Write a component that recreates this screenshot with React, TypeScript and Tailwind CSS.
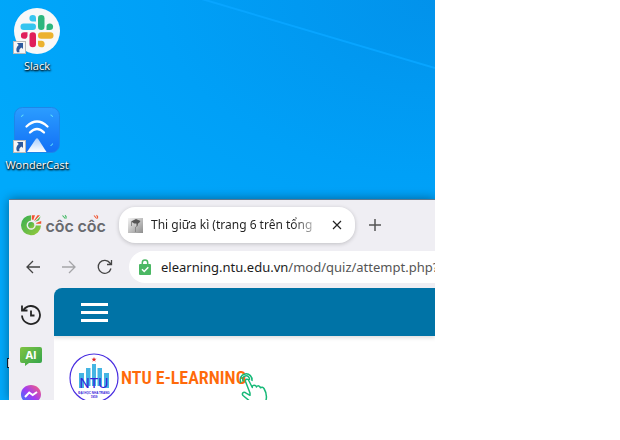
import type { ReactNode } from "react";

function Shortcut({ label, children }: { label: string; children: ReactNode }) {
  return (
    <a
      href="#"
      className="flex h-[99px] w-[74px] flex-col items-center pt-2 font-['Open_Sans','Noto_Sans',sans-serif] text-[11px] leading-4 font-medium text-white"
    >
      <span className="relative block size-[46px]">
        {children}
        <svg className="absolute bottom-0 -left-px size-[13px]" viewBox="0 0 13 13" aria-hidden="true">
          <rect x=".5" y=".5" width="12" height="12" fill="#f6f6f6" stroke="#b9b9b9" />
          <path d="M4 2h6v6L8.500 6.500c-2 1.200-2.600 2.500-2 4.800H4C2.600 8.500 3.500 6 5.700 4z" fill="#2d5a9e" />
        </svg>
      </span>
      <span className="mt-1 whitespace-nowrap [text-shadow:1px_1px_2px_#000,0_1px_2px_#000]">{label}</span>
    </a>
  );
}

function SlackIcon() {
  return (
    <svg className="size-[46px]" viewBox="0 0 46 46" aria-hidden="true">
      <circle cx="23" cy="23" r="23" fill="#f8f8f8" />
      <g fill="#36c5f0">
        <rect x="6.500" y="15.500" width="15.500" height="6.500" rx="3.250" />
        <path d="M22 13.500h-3.500a3.300 3.300 0 1 1 3.500-3.300z" />
      </g>
      <g fill="#2eb67d">
        <rect x="24" y="7" width="6.500" height="15" rx="3.250" />
        <path d="M32.500 22v-3.500a3.300 3.300 0 1 1 3.300 3.500z" />
      </g>
      <g fill="#ecb22e">
        <rect x="24" y="24.200" width="15.500" height="6.500" rx="3.250" />
        <path d="M24 32.700h3.500a3.300 3.300 0 1 1-3.500 3.300z" />
      </g>
      <g fill="#e01e5a">
        <rect x="15.500" y="24.200" width="6.500" height="15" rx="3.250" />
        <path d="M13.500 24.200v3.500a3.300 3.300 0 1 1-3.300-3.500z" />
      </g>
    </svg>
  );
}

function CastIcon() {
  return (
    <svg className="size-[46px]" viewBox="0 0 46 46" aria-hidden="true">
      <defs>
        <linearGradient id="cast" x1="0" y1="0" x2="0" y2="1">
          <stop offset="0" stopColor="#2b9dff" />
          <stop offset="1" stopColor="#1270f6" />
        </linearGradient>
        <linearGradient id="beam" x1="0" y1="0" x2="0" y2="1">
          <stop offset="0" stopColor="#a8cdfb" />
          <stop offset="1" stopColor="#fff" />
        </linearGradient>
      </defs>
      <rect x=".5" y=".5" width="45" height="45" rx="8" fill="url(#cast)" stroke="#1d86e8" />
      <g fill="none" stroke="#fff" strokeWidth="2.300" strokeLinecap="round">
        <path d="M12.500 19.500Q23 9.500 33.500 19.500" />
        <path d="M16 25.500Q23 18.500 30 25.500" />
      </g>
      <g fill="none" stroke="#5fe0fb" strokeWidth="1">
        <path d="M7.500 10Q7.500 8 9.500 8M36.500 8Q38.500 8 38.500 10M38.500 36.500Q38.500 38.500 36.500 38.500" />
      </g>
      <path d="M21.800 32q1.200-1.500 2.400 0L32.500 45H13z" fill="url(#beam)" />
    </svg>
  );
}

function CocCocLogo() {
  return (
    <svg className="h-6 w-[86px] shrink-0" viewBox="0 0 86 24" role="img" aria-label="cốc cốc">
      <defs>
        <linearGradient id="coc" x1="0" y1="0" x2="1" y2="1">
          <stop offset="0" stopColor="#35ae52" />
          <stop offset="1" stopColor="#9acb3b" />
        </linearGradient>
      </defs>
      <path d="M10 2.200A10 10 0 1 0 20 12.500H14.800A4.600 4.600 0 1 1 10 7.600z" fill="url(#coc)" />
      <circle cx="10.200" cy="12.200" r="3.100" fill="url(#coc)" />
      <path d="M10.800 2.200h3.200L12.300 7l-1.500-.500z" fill="#f0542f" />
      <path d="M19.700 3.200L18 7.300 14 8.700z" fill="#55b84b" />
      <path d="M16.500 2.200h2.500L13.800 7.800l-.600-.500zM20.200 8v2.700h-5v-.700z" fill="#f0542f" />
      <g fill="#696a6e" className="font-['Inter','Liberation_Sans',sans-serif] text-base font-semibold">
        <text x="24.500" y="19">côc</text>
        <text x="56.500" y="19">côc</text>
      </g>
      <path d="M41.500 2.500l2.700 3M44 2.200q1.800 1.300 1 3.300" stroke="#42b963" strokeWidth="1.100" fill="none" />
      <path d="M73 2.500l2.700 3M75.500 2.200q1.800 1.300 1 3.300" stroke="#f0542f" strokeWidth="1.100" fill="none" />
    </svg>
  );
}

function TabStrip() {
  return (
    <div className="flex h-[47px] items-start pt-[7px] pl-3">
      <div className="flex h-9 items-center">
        <CocCocLogo />
      </div>
      <div className="ml-3 flex h-9 w-[236px] shrink-0 items-center rounded-2xl bg-white pr-[10px] pl-[9px] shadow-[0_1px_4px_#0003]">
        <svg className="size-[15px] shrink-0" viewBox="0 0 15 15" aria-hidden="true">
          <defs>
            <linearGradient id="fav" x1="0" y1="0" x2="1" y2="1">
              <stop offset="0" stopColor="#f4f4f4" />
              <stop offset="1" stopColor="#8d8d8d" />
            </linearGradient>
          </defs>
          <rect width="15" height="15" fill="url(#fav)" />
          <path d="M3 3.500L8 1l4.500 2L11 5l-1 .500-.500 2.500-1.500 1L7 6.500 5.500 5z" fill="#555" />
          <path d="M3.500 4v4M7.500 9v5" stroke="#888" />
          <path d="M6 5.500h2.500v3H7z" fill="#ccc" />
        </svg>
        <span className="ml-2 w-[166px] overflow-hidden bg-linear-to-r from-[#222] from-85% to-[#2223] bg-clip-text font-['Noto_Sans','Open_Sans',sans-serif] text-xs leading-5 whitespace-nowrap text-transparent">
          Thi giữa kì (trang 6 trên tổng
        </span>
        <button type="button" aria-label="Close tab" className="ml-auto flex size-4 items-center justify-center">
          <svg className="size-[10px]" viewBox="0 0 10 10" fill="none" stroke="#222" strokeWidth="1.200">
            <path d="M1 1l8 8M9 1L1 9" />
          </svg>
        </button>
      </div>
      <button type="button" aria-label="New tab" className="ml-3 flex h-9 w-4 shrink-0 items-center justify-center">
        <svg className="size-3" viewBox="0 0 12 12" fill="none" stroke="#555" strokeWidth="1.500">
          <path d="M6 0v12M0 6h12" />
        </svg>
      </button>
    </div>
  );
}

function Toolbar() {
  return (
    <div className="flex h-10 items-center pl-4">
      <button type="button" aria-label="Back" className="size-4 shrink-0">
        <svg className="size-4" viewBox="0 0 16 16" fill="none" stroke="#444" strokeWidth="1.300">
          <path d="M15 8H2M8 2L2 8l6 6" />
        </svg>
      </button>
      <button type="button" aria-label="Forward" className="ml-5 size-4 shrink-0">
        <svg className="size-4" viewBox="0 0 16 16" fill="none" stroke="#a5a5a8" strokeWidth="1.300">
          <path d="M1 8h13M8 2l6 6-6 6" />
        </svg>
      </button>
      <button type="button" aria-label="Reload" className="ml-5 size-4 shrink-0">
        <svg className="size-4" viewBox="0 0 16 16" fill="none" stroke="#444" strokeWidth="1.300">
          <path d="M14 9.500A6.500 6.500 0 1 1 13 4L14 5M14.500 1v4.500H10" />
        </svg>
      </button>
      <label className="ml-4 flex h-8 min-w-0 flex-1 items-center rounded-l-2xl bg-white pl-2.5">
        <svg className="h-4 w-3 shrink-0" viewBox="0 0 12 16" aria-hidden="true">
          <path d="M3.300 6V3.700a2.700 2.700 0 0 1 5.400 0V6" fill="none" stroke="#4bb864" strokeWidth="1.500" />
          <rect y="5" width="12" height="11" rx="1" fill="#4bb864" />
          <path d="M3 10.300l2.200 2.200L9.300 8.300" fill="none" stroke="#fff" strokeWidth="1.500" />
        </svg>
        <span className="relative ml-2.5 block h-5 min-w-0 flex-1 overflow-hidden font-['Noto_Sans','Open_Sans',sans-serif] text-[13px] leading-5">
          <input
            aria-label="Address"
            className="block h-5 w-full text-[#555] outline-none"
            defaultValue="elearning.ntu.edu.vn/mod/quiz/attempt.php?"
          />
          <span aria-hidden="true" className="pointer-events-none absolute top-0 left-0 bg-white text-[#1c1c1c]">
            elearning.ntu.edu.vn
          </span>
        </span>
      </label>
    </div>
  );
}

function Sidebar() {
  return (
    <nav className="flex w-[45px] shrink-0 flex-col items-start pt-4 pl-[11px]">
      <button type="button" aria-label="History">
        <svg className="size-[22px]" viewBox="0 0 22 22" fill="none" stroke="#242424" strokeWidth="1.800">
          <path d="M3.300 6.300A9 9 0 1 1 2 11.500M2 1.500v5h5.500M11 6.500v5h3.500" />
        </svg>
      </button>
      <button type="button" aria-label="AI" className="mt-5">
        <svg className="h-5 w-[22px]" viewBox="0 0 22 20">
          <defs>
            <linearGradient id="ai" x1="0" y1="0" x2="1" y2="1">
              <stop offset="0" stopColor="#80c342" />
              <stop offset="1" stopColor="#2fa34c" />
            </linearGradient>
          </defs>
          <path d="M2 1h18q2 0 2 2v12q0 2-2 2H9l-4 3v-3H2q-2 0-2-2V3q0-2 2-2z" fill="url(#ai)" />
          <text
            x="11"
            y="12.500"
            textAnchor="middle"
            fill="#fff"
            className="font-['Open_Sans',sans-serif] text-[11px] font-bold"
          >
            AI
          </text>
        </svg>
      </button>
      <button type="button" aria-label="Messenger" className="mt-[18px] w-[22px] px-px">
        <svg className="h-[22px] w-5" viewBox="0 0 20 22">
          <defs>
            <linearGradient id="msg" x1="0" y1="1" x2="1" y2="0">
              <stop offset="0" stopColor="#1688ff" />
              <stop offset=".5" stopColor="#a13cf3" />
              <stop offset="1" stopColor="#ff6470" />
            </linearGradient>
          </defs>
          <path d="M10 1C4.300 1 0 5 0 10.300c0 3 1.300 5.400 3.300 7V21l3.200-2c6.500 1.800 13.500-2 13.500-8.700C20 5 15.700 1 10 1z" fill="url(#msg)" />
          <path d="M4 13l4.200-4.500 3.500 2.500L16 8" fill="none" stroke="#fff" strokeWidth="2" />
        </svg>
      </button>
    </nav>
  );
}

function UniversitySeal() {
  return (
    <svg className="size-[50px] shrink-0" viewBox="0 0 50 50" role="img" aria-label="NTU">
      <circle cx="25" cy="25" r="24" fill="#fff" stroke="#4a2fe0" strokeWidth="1.200" />
      <path d="M25 4l.700 1.800h1.800l-1.500 1.100.600 1.800L25 7.600l-1.600 1.100.600-1.800-1.500-1.100h1.800z" fill="#e02020" />
      <g fill="#45b5e3">
        <path d="M10 20h5v15h-5zM17 15h4.500v18H17zM23 11h4v22h-4zM28.500 15H33v18h-4.500zM35 20h5v15h-5z" />
      </g>
      <g fill="#3320d8" textAnchor="middle" className="font-['Liberation_Sans',Arial,sans-serif]">
        <text x="25" y="35" className="text-[14px]">NTU</text>
        <text x="25" y="40.500" className="text-[3px] font-bold">ĐẠI HỌC NHA TRANG</text>
        <text x="25" y="44.500" className="text-[3px] font-bold">1959</text>
      </g>
    </svg>
  );
}

function TapHand() {
  return (
    <svg className="-ml-2 h-8 w-[30px] shrink-0 self-end" viewBox="0 0 30 32" fill="none" stroke="#17b978" strokeWidth="1.500" strokeLinejoin="round" aria-hidden="true">
      <path d="M3 12A6 6 0 1 1 14 10M5.300 10.500A3.500 3.500 0 1 1 11.500 9" />
      <path d="M12 22L7.500 10.500Q7 8.500 8.800 8.300T11 10l3.300 6.500q0-3 3-2 .800.200 1.200 1.500 1-2 3.200-.500l.800 1.300q1.800-1.500 3.500.700c3 5 3.500 9 1 14.500H14L5 24.500q-1.500-2 .500-3 1-.500 3 .800l3.500 2z" />
    </svg>
  );
}

function WebPage() {
  return (
    <main className="flex min-w-0 flex-1 flex-col overflow-hidden rounded-tl-lg bg-white">
      <header className="flex h-12 shrink-0 items-center bg-[#0073a6] pl-[27px] shadow-[0_2px_4px_#0002]">
        <button type="button" aria-label="Menu" className="flex w-[27px] flex-col gap-[5px]">
          <span className="h-[3px] bg-white" />
          <span className="h-[3px] bg-white" />
          <span className="h-[3px] bg-white" />
        </button>
      </header>
      <a href="#" className="flex shrink-0 items-center pt-[17px] pl-[15px]">
        <UniversitySeal />
        <span className="ml-0.5 font-['Roboto_Condensed','Roboto',sans-serif] text-lg leading-6 font-semibold whitespace-nowrap text-[#ff6a0a]">
          NTU E-LEARNING
        </span>
        <TapHand />
      </a>
    </main>
  );
}

export default function App() {
  return (
    <div className="h-screen bg-white pr-[185px] pb-10">
      <div className="relative flex h-full flex-col overflow-hidden bg-[radial-gradient(500px_320px_at_top_right,#0292eb,#00a0f7_55%,#00a9fb)]">
        <svg className="absolute top-0 right-0 h-[70px] w-[240px]" viewBox="0 0 240 70" aria-hidden="true">
          <path d="M0-3L240 68" stroke="#08a5ff" strokeWidth="2" />
        </svg>
        <div className="h-[199px] shrink-0">
          <Shortcut label="Slack">
            <SlackIcon />
          </Shortcut>
          <Shortcut label="WonderCast">
            <CastIcon />
          </Shortcut>
        </div>
        <span className="absolute top-[358px] left-[7px] h-2.5 w-1 border border-[#123] bg-white" />
        <section className="relative ml-[9px] flex min-h-0 flex-1 flex-col border-t border-[#5b7890] bg-[#efeef3] shadow-[0_0_10px_#0006]">
          <TabStrip />
          <Toolbar />
          <div className="flex min-h-0 flex-1 pt-px">
            <Sidebar />
            <WebPage />
          </div>
        </section>
      </div>
    </div>
  );
}
